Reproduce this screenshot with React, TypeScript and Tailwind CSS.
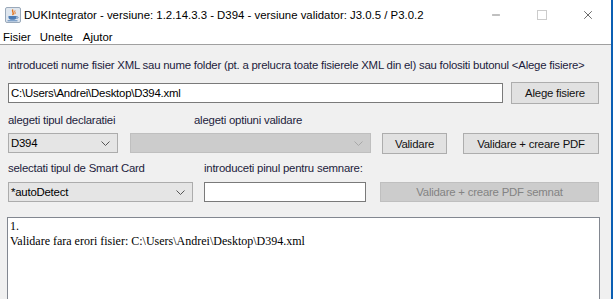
import { Minus, X } from "lucide-react";

const ui = "font-['Liberation_Sans',Arial,sans-serif] text-[11.4px] leading-[16px] whitespace-nowrap";

function Chevron({ color = "#555" }: { color?: string }) {
  return (
    <svg width="9" height="5" viewBox="0 0 9 5" className="shrink-0">
      <path d="M0.5 0.5 L4.5 4.5 L8.5 0.5" fill="none" stroke={color} strokeWidth="1" />
    </svg>
  );
}

function JavaIcon() {
  return (
    <svg width="16" height="16" viewBox="0 0 16 16" className="shrink-0">
      <rect x="0.5" y="0.5" width="15" height="15" rx="1.5" fill="#dfe6ee" stroke="#9aa9ba" />
      <path d="M8 2.5 C6 4.5 10 5.5 7.5 8" fill="none" stroke="#e2731b" strokeWidth="1.4" />
      <path d="M10 3.5 C9 5 11 5.5 9.8 7.2" fill="none" stroke="#e2731b" strokeWidth="1" />
      <path d="M3.5 9 H11.5 V10.5 C11.5 12 10 12.8 7.5 12.8 C5 12.8 3.5 12 3.5 10.5 Z" fill="#4a7bb5" />
      <path d="M11.5 9.5 C13.5 9.5 13.5 11.5 11.5 11.5" fill="none" stroke="#4a7bb5" strokeWidth="0.9" />
      <path d="M2.5 13.8 H12.5" stroke="#4a7bb5" strokeWidth="0.9" />
    </svg>
  );
}

function Button({ label, className, disabled }: { label: string; className: string; disabled?: boolean }) {
  return (
    <div
      className={`flex items-center justify-center border ${
        disabled ? "border-[#bfbfbf] bg-[#cccccc] text-[#838383]" : "border-[#adadad] bg-[#e1e1e1] text-[#111111]"
      } ${className}`}
    >
      {label}
    </div>
  );
}

export default function App() {
  return (
    <div className={`flex h-[299px] w-[613px] overflow-hidden bg-[#0b5fb3] ${ui}`}>
      <div className="flex w-[611px] shrink-0 flex-col bg-[#f0f0f0] text-[#1c1c3c]">
        <div className="flex h-[30px] shrink-0 items-center bg-white text-black">
          <div className="ml-[5px] flex items-center gap-[3px]">
            <JavaIcon />
            <span>DUKIntegrator - versiune: 1.2.14.3.3 - D394 - versiune validator: J3.0.5 / P3.0.2</span>
          </div>
          <div className="ml-auto flex h-full">
            <div className="flex w-[46px] items-center justify-center">
              <Minus size={12} strokeWidth={1} color="#000" />
            </div>
            <div className="flex w-[46px] items-center justify-center">
              <div className="h-[10px] w-[10px] border border-[#cccccc]" />
            </div>
            <div className="flex w-[46px] items-center justify-center">
              <X size={14} strokeWidth={1} color="#000" />
            </div>
          </div>
        </div>

        <div className="flex h-[15px] shrink-0 items-center border-b border-[#a0a0a0] bg-white pl-[3px] text-black">
          <span>Fisier</span>
          <span className="ml-[9px]">Unelte</span>
          <span className="ml-[10px]">Ajutor</span>
        </div>

        <div className="flex flex-col tracking-[-0.22px]">
          <div className="pl-[8px] pt-[12px]">introduceti nume fisier XML sau nume folder (pt. a prelucra toate fisierele XML din el) sau folositi butonul &lt;Alege fisiere&gt;</div>

          <div className="mt-[9px] flex items-center pl-[8px]">
            <div className="flex h-[20px] w-[495px] items-center border border-[#7a7a7a] bg-white pl-[2px] text-black">
              C:\Users\Andrei\Desktop\D394.xml
            </div>
            <Button label="Alege fisiere" className="ml-[8px] h-[22px] w-[88px]" />
          </div>

          <div className="mt-[8px] flex">
            <span className="ml-[8px] w-[186px]">alegeti tipul declaratiei</span>
            <span>alegeti optiuni validare</span>
          </div>

          <div className="mt-[5px] flex items-start pl-[8px]">
            <div className="flex h-[20px] w-[110px] items-center justify-between border border-[#acacac] bg-[#e5e5e5] pl-[2px] pr-[7px] text-black">
              <span>D394</span>
              <Chevron />
            </div>
            <div className="ml-[12px] flex h-[20px] w-[241px] items-center justify-end border border-[#bfbfbf] bg-[#cccccc] pr-[7px]">
              <Chevron color="#a8a8a8" />
            </div>
            <Button label="Validare" className="ml-[11px] h-[21px] w-[65px]" />
            <Button label="Validare + creare PDF" className="ml-[16px] h-[21px] w-[136px]" />
          </div>

          <div className="mt-[6px] flex">
            <span className="ml-[8px] w-[196px]">selectati tipul de Smart Card</span>
            <span>introduceti pinul pentru semnare:</span>
          </div>

          <div className="mt-[6px] flex items-start pl-[8px]">
            <div className="flex h-[20px] w-[185px] items-center justify-between border border-[#acacac] bg-[#e5e5e5] pl-[2px] pr-[7px] text-black">
              <span>*autoDetect</span>
              <Chevron />
            </div>
            <div className="ml-[11px] h-[20px] w-[162px] border border-[#7a7a7a] bg-white" />
            <Button label="Validare + creare PDF semnat" disabled className="ml-[14px] h-[20px] w-[219px]" />
          </div>
        </div>

        <div className="ml-[7px] mt-[15px] h-[120px] w-[593px] shrink-0 border border-[#828790] bg-white pl-[2px] pt-[1px] font-['Liberation_Serif','Times_New_Roman',serif] text-[12px] leading-[15px] text-black">
          <div>1.</div>
          <div>Validare fara erori fisier: C:\Users\Andrei\Desktop\D394.xml</div>
        </div>
      </div>
    </div>
  );
}
